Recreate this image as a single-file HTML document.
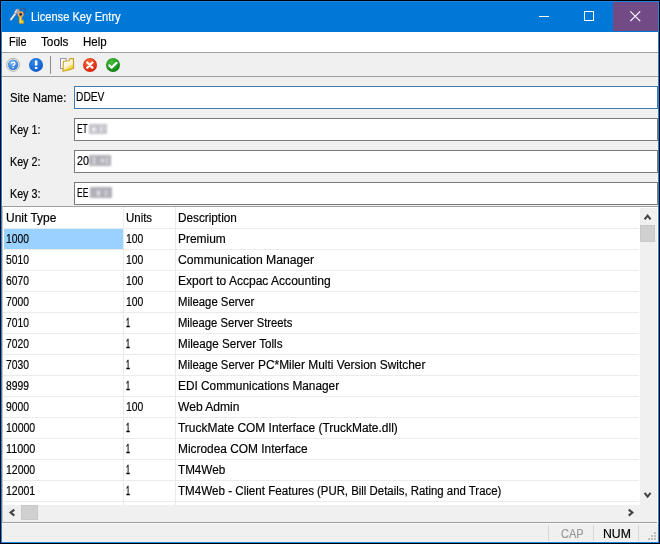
<!DOCTYPE html>
<html><head><meta charset="utf-8">
<style>
html,body{margin:0;padding:0;}
body{width:660px;height:544px;background:#000;position:relative;overflow:hidden;font-family:"Liberation Sans",sans-serif;font-size:12px;color:#000;}
.abs{position:absolute;}
.t{position:absolute;-webkit-text-stroke:0.18px currentColor;line-height:14px;white-space:nowrap;transform-origin:0 0;}
#frame{left:1px;top:1px;width:658px;height:542px;background:#1a86e8;}
#title{left:2px;top:2px;width:656px;height:30px;background:#0078d7;}
#close{left:613px;top:2px;width:45px;height:29px;background:#724a86;}
#menu{left:2px;top:32px;width:656px;height:20px;background:#fff;}
#l1{left:2px;top:52px;width:656px;height:1px;background:#a0a0a0;}
#tool{left:2px;top:53px;width:656px;height:23px;background:#f0f0f0;}
#l2{left:2px;top:76px;width:656px;height:1px;background:#a0a0a0;}
#client{left:2px;top:77px;width:656px;height:465px;background:#f0f0f0;}
.inp{left:74px;width:582px;height:21px;background:#fff;border:1px solid #7a7a7a;}
.blur{position:absolute;filter:blur(0.9px);}
.blur i{position:absolute;display:block;}
#grid{left:2px;top:206px;width:656px;height:317px;background:#fff;border-top:1px solid #a0a0a0;border-left:1px solid #c4c4c4;border-bottom:1px solid #a0a0a0;box-sizing:border-box;}
.hl{left:3px;width:636px;height:1px;background:#ebebeb;}
.vl{top:207px;width:1px;height:298px;background:#ebebeb;}
#sel{left:4px;top:229px;width:119px;height:20px;background:#99d1ff;}
#vs{left:640px;top:208px;width:17px;height:297px;background:#f0f0f0;}
#hs{left:3px;top:505px;width:654px;height:17px;background:#f0f0f0;}
.thumb{background:#d0d0d0;border:1px solid #c8c8c8;box-sizing:border-box;}
#status{left:2px;top:523px;width:656px;height:19px;background:#f0f0f0;}
.sep{top:525px;width:1px;height:16px;background:#d7d7d7;}
svg{position:absolute;left:0;top:0;overflow:visible;}
</style></head><body>
<div id="frame" class="abs"></div>
<div id="title" class="abs"></div>
<div id="close" class="abs"></div>
<div id="menu" class="abs"></div>
<div id="l1" class="abs"></div>
<div id="tool" class="abs"></div>
<div id="l2" class="abs"></div>
<div id="client" class="abs"></div>
<div class="abs inp" style="top:86px;border-color:#437cb4"></div>
<div class="abs inp" style="top:118px"></div>
<div class="abs inp" style="top:150px"></div>
<div class="abs inp" style="top:182px"></div>
<div class="blur" style="left:85px;top:120px;width:30px;height:18px">
<i style="left:4.2px;top:4.4px;width:17.4px;height:9.8px;background:#c2c2c8"></i>
<i style="left:6.5px;top:6.5px;width:4px;height:5.5px;background:#f0f0f2;border-radius:2px"></i>
<i style="left:14.5px;top:6px;width:2px;height:6px;background:#e6e6ea"></i>
<i style="left:18.5px;top:6px;width:1.5px;height:4px;background:#e0e0e4"></i>
</div>
<div class="blur" style="left:85px;top:150px;width:34px;height:20px">
<i style="left:4.4px;top:4.5px;width:21.4px;height:11.6px;background:#b2b2b9"></i>
<i style="left:8px;top:7px;width:2px;height:7px;background:#dcdce0"></i>
<i style="left:15.5px;top:8px;width:3px;height:5px;background:#dadade;border-radius:2px"></i>
<i style="left:21px;top:7px;width:1.5px;height:7px;background:#d4d4d8"></i>
</div>
<div class="blur" style="left:85px;top:183px;width:34px;height:20px">
<i style="left:5.4px;top:4.1px;width:21.4px;height:11px;background:#b0b0b7"></i>
<i style="left:11.5px;top:7px;width:3.5px;height:5.5px;background:#e0e0e4;border-radius:2px"></i>
<i style="left:19.5px;top:7px;width:2px;height:6px;background:#d4d4d8"></i>
</div>
<div class="abs" style="left:2px;top:77px;width:1px;height:129px;background:#fbfbfb"></div>
<div id="grid" class="abs"></div>
<div id="sel" class="abs"></div>
<div class="abs hl" style="top:228px"></div>
<div class="abs hl" style="top:249px"></div>
<div class="abs hl" style="top:270px"></div>
<div class="abs hl" style="top:291px"></div>
<div class="abs hl" style="top:312px"></div>
<div class="abs hl" style="top:333px"></div>
<div class="abs hl" style="top:354px"></div>
<div class="abs hl" style="top:375px"></div>
<div class="abs hl" style="top:396px"></div>
<div class="abs hl" style="top:417px"></div>
<div class="abs hl" style="top:438px"></div>
<div class="abs hl" style="top:459px"></div>
<div class="abs hl" style="top:480px"></div>
<div class="abs hl" style="top:501px"></div>

<div class="abs vl" style="left:123px"></div>
<div class="abs vl" style="left:175px"></div>
<div id="hs" class="abs"></div>
<div id="vs" class="abs"></div>
<div class="abs thumb" style="left:640px;top:225px;width:15px;height:17px"></div>
<div class="abs thumb" style="left:21px;top:505px;width:17px;height:15px"></div>
<div class="abs" style="left:657px;top:207px;width:1px;height:316px;background:#fff"></div>
<div id="status" class="abs"></div>
<div class="abs" style="left:2px;top:523px;width:656px;height:1px;background:#fafafa"></div>
<div class="abs sep" style="left:548px"></div>
<div class="abs sep" style="left:593px"></div>
<div class="abs sep" style="left:638px"></div>
<svg width="660" height="544" viewBox="0 0 660 544">
<!-- window buttons -->
<rect x="539" y="16" width="10" height="1" fill="#fff"/>
<rect x="584.5" y="11.5" width="9" height="9" fill="none" stroke="#fff" stroke-width="1"/>
<path d="M630.3 11.3 L640.2 21.2 M640.2 11.3 L630.3 21.2" stroke="#fff" stroke-width="1.2" fill="none"/>
<!-- title icon: keys -->
<ellipse cx="23" cy="10.8" rx="2.9" ry="2.7" fill="none" stroke="#46546e" stroke-width="0.9"/>
<path d="M16.2 12.6 L10.9 19.6" stroke="#7e8492" stroke-width="2.5" stroke-linecap="round"/>
<path d="M16.2 12.6 L11 19.4" stroke="#ececec" stroke-width="1.6" stroke-linecap="round"/>
<ellipse cx="17" cy="11.3" rx="2" ry="2.8" transform="rotate(38 17 11.3)" fill="#aaaab6" stroke="#737888" stroke-width="0.5"/>
<path d="M16.4 10.2 L15.2 12.8" stroke="#f4f4f4" stroke-width="1" stroke-linecap="round"/>
<circle cx="20.6" cy="14.3" r="2.25" fill="#50303c" stroke="#eeb060" stroke-width="1.5"/>
<circle cx="20.7" cy="14.4" r="0.8" fill="#2c1c50"/>
<path d="M19.3 16.9 H21.8 V20.3 H23.6 V23.4 H19.3 Z" fill="#f6cc30" stroke="#c88a18" stroke-width="0.6"/>
<path d="M20.2 17 V23" stroke="#fde878" stroke-width="0.8"/>
<!-- toolbar icons -->
<defs>
<radialGradient id="gq" cx="0.4" cy="0.3" r="0.8"><stop offset="0" stop-color="#7fb8f0"/><stop offset="1" stop-color="#1f6fd0"/></radialGradient>
<radialGradient id="gi" cx="0.4" cy="0.3" r="0.8"><stop offset="0" stop-color="#2f8ae8"/><stop offset="1" stop-color="#0a55c4"/></radialGradient>
<radialGradient id="gr" cx="0.4" cy="0.3" r="0.8"><stop offset="0" stop-color="#f86838"/><stop offset="1" stop-color="#d01804"/></radialGradient>
<radialGradient id="gg" cx="0.4" cy="0.3" r="0.8"><stop offset="0" stop-color="#48c038"/><stop offset="1" stop-color="#06780e"/></radialGradient>
</defs>
<circle cx="13.1" cy="64.8" r="6.5" fill="#e6e6ea" stroke="#b4b0a8" stroke-width="0.9"/>
<circle cx="13.1" cy="64.8" r="5.2" fill="url(#gq)"/>
<path d="M11.3 63.5 C11.3 61.7 14.9 61.7 14.9 63.5 C14.9 64.8 13.1 64.7 13.1 66.1" stroke="#fff" stroke-width="1.4" fill="none"/>
<rect x="12.4" y="67" width="1.4" height="1.3" fill="#fff"/>
<circle cx="36" cy="64.9" r="7" fill="url(#gi)"/>
<rect x="34.9" y="60.4" width="2.5" height="5.2" rx="0.5" fill="#fff"/>
<rect x="34.9" y="66.9" width="2.5" height="2.1" rx="0.5" fill="#fff"/>
<rect x="50" y="56" width="1" height="18" fill="#8e8e8e"/>
<!-- folder -->
<linearGradient id="gf" x1="0.3" y1="0" x2="0.8" y2="1"><stop offset="0" stop-color="#ffffff"/><stop offset="0.5" stop-color="#fbf3d0"/><stop offset="0.75" stop-color="#f3d440"/><stop offset="1" stop-color="#eec418"/></linearGradient>
<rect x="60.5" y="58.5" width="5.5" height="10" fill="#fdfdff" stroke="#9494ac" stroke-width="1"/>
<path d="M62.9 71.2 L63.4 61.3 L69.2 60.7 L69.9 58.6 L73.4 58.6 L73.6 68.3 L70 69.6 L66.4 70.5 Z" fill="url(#gf)" stroke="#c9a01c" stroke-width="1.1" stroke-linejoin="round"/>
<!-- red x -->
<circle cx="90" cy="65" r="7" fill="url(#gr)"/>
<path d="M87.2 62.5 L92.4 67.7 M92.4 62.5 L87.2 67.7" stroke="#fff" stroke-width="2.3" stroke-linecap="round"/>
<!-- green check -->
<circle cx="113" cy="65" r="7" fill="url(#gg)"/>
<path d="M109.3 65.4 L111.6 67.6 L116.6 62.8" stroke="#fff" stroke-width="2.2" fill="none" stroke-linecap="round" stroke-linejoin="round"/>
<!-- scroll arrows -->
<path d="M644.6 219.4 L647.6 215.6 L650.6 219.4" stroke="#454545" stroke-width="2.1" fill="none"/>
<path d="M644.6 492.8 L647.6 496.6 L650.6 492.8" stroke="#454545" stroke-width="2.1" fill="none"/>
<path d="M14.3 509.6 L10.6 512.6 L14.3 515.6" stroke="#454545" stroke-width="2.1" fill="none"/>
<path d="M628.7 509.6 L632.4 512.6 L628.7 515.6" stroke="#454545" stroke-width="2.1" fill="none"/>
<!-- grip -->
<g fill="#bfbfbf">
<rect x="654" y="532" width="2" height="2"/>
<rect x="651" y="535" width="2" height="2"/><rect x="654" y="535" width="2" height="2"/>
<rect x="648" y="538" width="2" height="2"/><rect x="651" y="538" width="2" height="2"/><rect x="654" y="538" width="2" height="2"/>
</g>
</svg>
<div class="t" style="left:31.40px;top:10px;color:#fff;font-size:12px;transform:scaleX(0.9271);">License Key Entry</div>
<div class="t" style="left:9.20px;top:35px;color:#000;font-size:12px;transform:scaleX(0.9039);">File</div>
<div class="t" style="left:41.40px;top:35px;color:#000;font-size:12px;transform:scaleX(0.9786);">Tools</div>
<div class="t" style="left:83.20px;top:35px;color:#000;font-size:12px;transform:scaleX(0.9576);">Help</div>
<div class="t" style="left:10.00px;top:91px;color:#000;font-size:12px;transform:scaleX(0.9485);">Site Name:</div>
<div class="t" style="left:10.20px;top:123px;color:#000;font-size:12px;transform:scaleX(0.8941);">Key 1:</div>
<div class="t" style="left:10.20px;top:155px;color:#000;font-size:12px;transform:scaleX(0.8941);">Key 2:</div>
<div class="t" style="left:10.20px;top:187px;color:#000;font-size:12px;transform:scaleX(0.8941);">Key 3:</div>
<div class="t" style="left:76.25px;top:90px;color:#000;font-size:12px;transform:scaleX(0.8526);">DDEV</div>
<div class="t" style="left:77.40px;top:122px;color:#000;font-size:12px;transform:scaleX(0.7016);">ET</div>
<div class="t" style="left:76.80px;top:154px;color:#000;font-size:12px;transform:scaleX(0.8906);">20</div>
<div class="t" style="left:77.40px;top:186px;color:#000;font-size:12px;transform:scaleX(0.7125);">EE</div>
<div class="t" style="left:6.20px;top:211px;color:#000;font-size:12px;transform:scaleX(0.9980);">Unit Type</div>
<div class="t" style="left:126.10px;top:211px;color:#000;font-size:12px;transform:scaleX(0.9541);">Units</div>
<div class="t" style="left:177.80px;top:211px;color:#000;font-size:12px;transform:scaleX(0.9800);">Description</div>
<div class="t" style="left:6.30px;top:232px;color:#000;font-size:12px;transform:scaleX(0.8598);">1000</div>
<div class="t" style="left:126.30px;top:232px;color:#000;font-size:12px;transform:scaleX(0.8650);">100</div>
<div class="t" style="left:177.80px;top:232px;color:#000;font-size:12px;transform:scaleX(0.9938);">Premium</div>
<div class="t" style="left:6.30px;top:253px;color:#000;font-size:12px;transform:scaleX(0.8598);">5010</div>
<div class="t" style="left:126.30px;top:253px;color:#000;font-size:12px;transform:scaleX(0.8650);">100</div>
<div class="t" style="left:177.80px;top:253px;color:#000;font-size:12px;transform:scaleX(1.0157);">Communication Manager</div>
<div class="t" style="left:6.30px;top:274px;color:#000;font-size:12px;transform:scaleX(0.8598);">6070</div>
<div class="t" style="left:126.30px;top:274px;color:#000;font-size:12px;transform:scaleX(0.8650);">100</div>
<div class="t" style="left:177.80px;top:274px;color:#000;font-size:12px;transform:scaleX(1.0036);">Export to Accpac Accounting</div>
<div class="t" style="left:6.30px;top:295px;color:#000;font-size:12px;transform:scaleX(0.8598);">7000</div>
<div class="t" style="left:126.30px;top:295px;color:#000;font-size:12px;transform:scaleX(0.8650);">100</div>
<div class="t" style="left:177.80px;top:295px;color:#000;font-size:12px;transform:scaleX(0.9449);">Mileage Server</div>
<div class="t" style="left:6.30px;top:316px;color:#000;font-size:12px;transform:scaleX(0.8598);">7010</div>
<div class="t" style="left:126.30px;top:316px;color:#000;font-size:12px;transform:scaleX(0.5926);-webkit-text-stroke:0.35px #000;">1</div>
<div class="t" style="left:177.80px;top:316px;color:#000;font-size:12px;transform:scaleX(0.9361);">Mileage Server Streets</div>
<div class="t" style="left:6.30px;top:337px;color:#000;font-size:12px;transform:scaleX(0.8598);">7020</div>
<div class="t" style="left:126.30px;top:337px;color:#000;font-size:12px;transform:scaleX(0.5926);-webkit-text-stroke:0.35px #000;">1</div>
<div class="t" style="left:177.80px;top:337px;color:#000;font-size:12px;transform:scaleX(0.9689);">Mileage Server Tolls</div>
<div class="t" style="left:6.30px;top:358px;color:#000;font-size:12px;transform:scaleX(0.8598);">7030</div>
<div class="t" style="left:126.30px;top:358px;color:#000;font-size:12px;transform:scaleX(0.5926);-webkit-text-stroke:0.35px #000;">1</div>
<div class="t" style="left:177.80px;top:358px;color:#000;font-size:12px;transform:scaleX(0.9449);">Mileage Server</div>
<div class="t" style="left:257.70px;top:358px;color:#000;font-size:12px;transform:scaleX(0.9920);">PC*Miler Multi Version Switcher</div>
<div class="t" style="left:6.30px;top:379px;color:#000;font-size:12px;transform:scaleX(0.8598);">8999</div>
<div class="t" style="left:126.30px;top:379px;color:#000;font-size:12px;transform:scaleX(0.5926);-webkit-text-stroke:0.35px #000;">1</div>
<div class="t" style="left:177.80px;top:379px;color:#000;font-size:12px;transform:scaleX(0.9859);">EDI Communications Manager</div>
<div class="t" style="left:6.30px;top:400px;color:#000;font-size:12px;transform:scaleX(0.8598);">9000</div>
<div class="t" style="left:126.30px;top:400px;color:#000;font-size:12px;transform:scaleX(0.8650);">100</div>
<div class="t" style="left:177.80px;top:400px;color:#000;font-size:12px;transform:scaleX(1.0057);">Web Admin</div>
<div class="t" style="left:6.30px;top:421px;color:#000;font-size:12px;transform:scaleX(0.8746);">10000</div>
<div class="t" style="left:126.30px;top:421px;color:#000;font-size:12px;transform:scaleX(0.5926);-webkit-text-stroke:0.35px #000;">1</div>
<div class="t" style="left:177.80px;top:421px;color:#000;font-size:12px;transform:scaleX(0.9968);">TruckMate COM Interface (TruckMate.dll)</div>
<div class="t" style="left:6.30px;top:442px;color:#000;font-size:12px;transform:scaleX(0.9015);">11000</div>
<div class="t" style="left:126.30px;top:442px;color:#000;font-size:12px;transform:scaleX(0.5926);-webkit-text-stroke:0.35px #000;">1</div>
<div class="t" style="left:177.80px;top:442px;color:#000;font-size:12px;transform:scaleX(0.9912);">Microdea COM Interface</div>
<div class="t" style="left:6.30px;top:463px;color:#000;font-size:12px;transform:scaleX(0.8746);">12000</div>
<div class="t" style="left:126.30px;top:463px;color:#000;font-size:12px;transform:scaleX(0.5926);-webkit-text-stroke:0.35px #000;">1</div>
<div class="t" style="left:177.80px;top:463px;color:#000;font-size:12px;transform:scaleX(0.9732);">TM4Web</div>
<div class="t" style="left:6.30px;top:484px;color:#000;font-size:12px;transform:scaleX(0.8746);">12001</div>
<div class="t" style="left:126.30px;top:484px;color:#000;font-size:12px;transform:scaleX(0.5926);-webkit-text-stroke:0.35px #000;">1</div>
<div class="t" style="left:177.80px;top:484px;color:#000;font-size:12px;transform:scaleX(0.9687);">TM4Web - Client Features</div>
<div class="t" style="left:316.90px;top:484px;color:#000;font-size:12px;transform:scaleX(0.9498);">(PUR, Bill Details, Rating and Trace)</div>
<div class="t" style="left:561.40px;top:527px;color:#999;font-size:12px;transform:scaleX(0.9131);">CAP</div>
<div class="t" style="left:603.40px;top:527px;color:#000;font-size:12px;transform:scaleX(1.0202);">NUM</div>

</body></html>
